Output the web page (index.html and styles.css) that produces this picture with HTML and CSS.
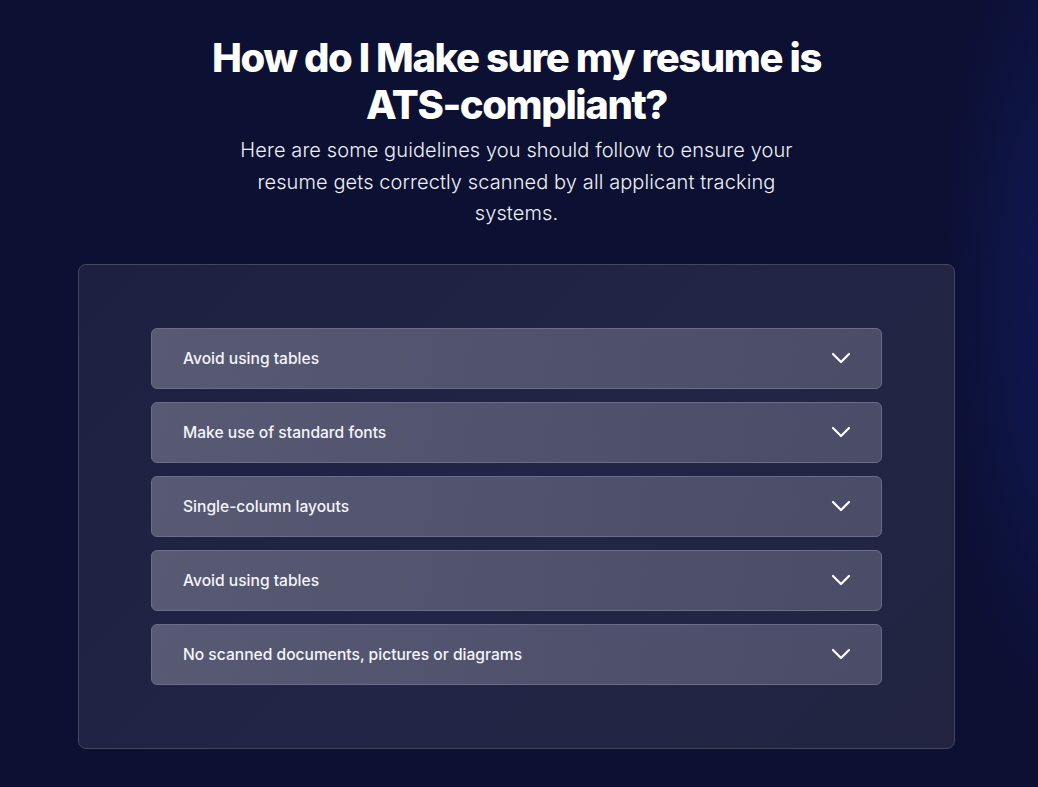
FILE: index.html
```html
<!DOCTYPE html>
<html lang="en">
<head>
<meta charset="utf-8">
<title>ATS-compliant resume</title>
<link rel="stylesheet" href="styles.css">
</head>
<body>
<main class="page">
  <section class="intro">
    <h1 class="title">How do I Make sure my resume is ATS-compliant?</h1>
    <p class="subtitle">Here are some guidelines you should follow to ensure your resume gets correctly scanned by all applicant tracking systems.</p>
  </section>
  <section class="card">
    <ul class="faq">
      <li class="item"><span class="label">Avoid using tables</span><svg class="chev" viewBox="0 0 20 12" width="20" height="12"><path d="M2 2 L10 10 L18 2" fill="none" stroke="#fff" stroke-width="2.2" stroke-linecap="round" stroke-linejoin="round"/></svg></li>
      <li class="item"><span class="label">Make use of standard fonts</span><svg class="chev" viewBox="0 0 20 12" width="20" height="12"><path d="M2 2 L10 10 L18 2" fill="none" stroke="#fff" stroke-width="2.2" stroke-linecap="round" stroke-linejoin="round"/></svg></li>
      <li class="item"><span class="label">Single-column layouts</span><svg class="chev" viewBox="0 0 20 12" width="20" height="12"><path d="M2 2 L10 10 L18 2" fill="none" stroke="#fff" stroke-width="2.2" stroke-linecap="round" stroke-linejoin="round"/></svg></li>
      <li class="item"><span class="label">Avoid using tables</span><svg class="chev" viewBox="0 0 20 12" width="20" height="12"><path d="M2 2 L10 10 L18 2" fill="none" stroke="#fff" stroke-width="2.2" stroke-linecap="round" stroke-linejoin="round"/></svg></li>
      <li class="item"><span class="label">No scanned documents, pictures or diagrams</span><svg class="chev" viewBox="0 0 20 12" width="20" height="12"><path d="M2 2 L10 10 L18 2" fill="none" stroke="#fff" stroke-width="2.2" stroke-linecap="round" stroke-linejoin="round"/></svg></li>
    </ul>
  </section>
</main>
</body>
</html>
```

FILE: styles.css
```css
* { box-sizing: border-box; }
html, body { margin: 0; padding: 0; }
body {
  background: #0c1033;
  background-image: radial-gradient(ellipse 120px 420px at 1060px 300px, rgba(20, 30, 110, 0.55), rgba(12, 16, 51, 0) 100%);
  font-family: Inter, "Noto Sans", sans-serif;
  color: #fff;
  min-height: 787px;
  overflow: hidden;
}
.page {
  width: 1033px;
  display: flex;
  flex-direction: column;
  align-items: center;
  padding-top: 34px;
}
.intro {
  display: flex;
  flex-direction: column;
  align-items: center;
  text-align: center;
}
.title {
  margin: 0;
  width: 640px;
  font-size: 40px;
  font-weight: 800;
  line-height: 47px;
  letter-spacing: -1.4px;
}
.subtitle {
  margin: 7px 0 0;
  width: 580px;
  font-size: 20px;
  font-weight: 300;
  line-height: 31.5px;
  letter-spacing: 0.1px;
  color: #eef0f8;
}
.card {
  margin-top: 34px;
  width: 877px;
  height: 485px;
  border: 1px solid #45465a;
  border-radius: 8px;
  background: linear-gradient(135deg, #1e2041 0%, #222545 55%, #222441 100%);
  padding: 63px 72px;
}
.faq {
  list-style: none;
  margin: 0;
  padding: 0;
  display: flex;
  flex-direction: column;
  gap: 13px;
}
.item {
  height: 61px;
  border: 1px solid #6b6e88;
  border-radius: 6px;
  background: linear-gradient(100deg, #585a74 0%, #50526d 55%, #4a4c68 100%);
  display: flex;
  align-items: center;
  justify-content: space-between;
  padding: 0 30px 0 31px;
}
.label {
  font-size: 15.6px;
  font-weight: 500;
  color: #f4f5fa;
}
.chev {
  display: block;
}
```
